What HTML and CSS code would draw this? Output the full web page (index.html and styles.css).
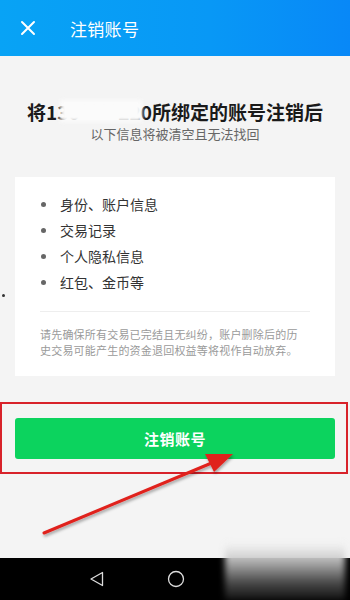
FILE: index.html
```html
<!DOCTYPE html>
<html lang="zh-CN">
<head>
<meta charset="utf-8">
<link rel="stylesheet" href="styles.css">
</head>
<body>
<div class="screen">
  <header class="topbar">
    <svg class="close" width="16" height="16" viewBox="0 0 16 16"><path d="M2 2L14 14M14 2L2 14" stroke="#fff" stroke-width="2" stroke-linecap="round"/></svg>
    <span class="title">注销账号</span>
  </header>
  <main class="content">
    <h1 class="heading">将<span class="phone">130****220<span class="blot"></span></span>所绑定的账号注销后</h1>
    <p class="sub">以下信息将被清空且无法找回</p>
    <section class="card">
      <ul class="list">
        <li>身份、账户信息</li>
        <li>交易记录</li>
        <li>个人隐私信息</li>
        <li>红包、金币等</li>
      </ul>
      <div class="divider"></div>
      <p class="note">请先确保所有交易已完结且无纠纷，账户删除后的历史交易可能产生的资金退回权益等将视作自动放弃。</p>
    </section>
    <div class="btnwrap">
      <button class="btn">注销账号</button>
    </div>
    <span class="dot"></span>
    <div class="redbox"></div>
    <svg class="arrow" width="350" height="600" viewBox="0 0 350 600">
      <defs><filter id="sh" x="-10%" y="-10%" width="120%" height="130%"><feDropShadow dx="1" dy="2" stdDeviation="1.5" flood-color="#000" flood-opacity="0.35"/></filter></defs>
      <g filter="url(#sh)">
        <line x1="44" y1="533" x2="214" y2="462" stroke="#e0201c" stroke-width="3" stroke-linecap="round"/>
        <polygon points="233,454 205,454 214,472" fill="#e0201c"/>
      </g>
    </svg>
  </main>
  <nav class="navbar">
    <svg class="back" width="16" height="16" viewBox="0 0 16 16"><path d="M13.5 1.5V14.5L2 8Z" fill="none" stroke="#ddd" stroke-width="1.3" stroke-linejoin="round"/></svg>
    <svg class="home" width="18" height="18" viewBox="0 0 18 18"><circle cx="9" cy="9" r="7.5" fill="none" stroke="#ddd" stroke-width="1.3"/></svg>
  </nav>
  <div class="smear"></div>
</div>
</body>
</html>
```

FILE: styles.css
```css
* { box-sizing: border-box; }
html, body { margin: 0; padding: 0; }
body {
  width: 350px;
  height: 600px;
  overflow: hidden;
  font-family: "Noto Sans CJK SC", "Noto Sans", sans-serif;
}
.screen {
  position: relative;
  width: 350px;
  height: 600px;
  display: flex;
  flex-direction: column;
}
.topbar {
  height: 56px;
  flex: none;
  background: linear-gradient(90deg, #08a3f5 0%, #0898f6 60%, #0888f7 100%);
  display: flex;
  align-items: center;
  padding-left: 20px;
}
.close { flex: none; }
.title {
  color: #fff;
  font-size: 17px;
  margin-left: 34px;
  letter-spacing: 0.3px;
}
.content {
  position: relative;
  flex: 1;
  background: #f4f4f4;
  padding: 44px 15px 0;
}
.heading {
  margin: 0;
  text-align: center;
  font-size: 19px;
  line-height: 24px;
  font-weight: 700;
  color: #1a1a1a;
}
.phone {
  position: relative;
  font-weight: 700;
}
.blot {
  position: absolute;
  left: 14px;
  right: 10px;
  top: 2px;
  bottom: 3px;
  background: #fbfbfb;
  filter: blur(2px);
}
.sub {
  margin: 1px 0 0;
  text-align: center;
  font-size: 13px;
  line-height: 18px;
  color: #666;
}
.card {
  margin-top: 34px;
  background: #fff;
  padding: 14px 25px 18px;
}
.list {
  list-style: none;
  margin: 0;
  padding: 0;
}
.list li {
  position: relative;
  font-size: 14px;
  line-height: 26px;
  color: #333;
  padding-left: 20px;
}
.list li::before {
  content: "";
  position: absolute;
  left: 1px;
  top: 11px;
  width: 5px;
  height: 5px;
  border-radius: 50%;
  background: #666;
}
.divider {
  height: 1px;
  background: #eeeeee;
  margin-top: 16px;
}
.note {
  margin: 14px 0 0;
  padding-right: 8px;
  font-size: 11px;
  line-height: 16px;
  color: #9a9a9a;
  letter-spacing: 0.2px;
}
.btnwrap {
  margin-top: 42px;
}
.btn {
  display: block;
  width: 100%;
  height: 41px;
  border: none;
  border-radius: 3px;
  background: #0cd35e;
  color: #fff;
  font-family: "Noto Sans CJK SC", sans-serif;
  font-size: 15px;
  font-weight: 700;
  letter-spacing: 0.5px;
}
.dot {
  position: absolute;
  left: 2px;
  top: 238px;
  width: 3px;
  height: 3px;
  border-radius: 50%;
  background: #333;
}
.redbox {
  position: absolute;
  left: 0;
  top: 346px;
  width: 348px;
  height: 72px;
  border: 2px solid #d8222a;
}
.arrow {
  position: absolute;
  left: 0;
  top: -56px;
  pointer-events: none;
}
.navbar {
  height: 42px;
  flex: none;
  background: #000;
  display: flex;
  align-items: center;
  padding-left: 89px;
}
.back { flex: none; }
.home { flex: none; margin-left: 62px; }
.smear {
  position: absolute;
  left: 225px;
  top: 543px;
  width: 120px;
  height: 57px;
  background: linear-gradient(180deg, rgba(244,244,244,1) 0%, rgba(200,200,200,0.9) 30%, rgba(90,90,90,0.8) 70%, rgba(20,20,20,0.9) 100%);
  filter: blur(3px);
}
```
